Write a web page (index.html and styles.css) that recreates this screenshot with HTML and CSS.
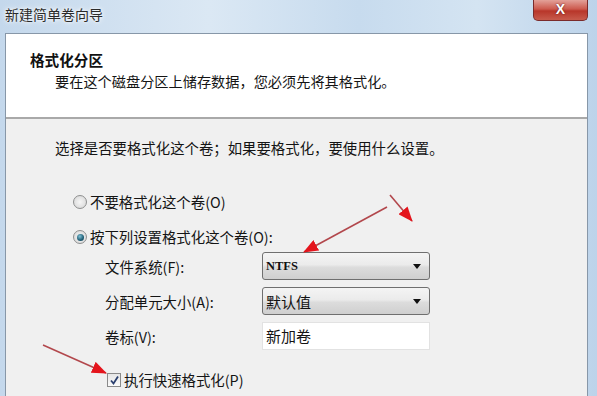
FILE: index.html
```html
<!DOCTYPE html>
<html lang="zh-CN">
<head>
  <meta charset="UTF-8" />
  <title>新建简单卷向导</title>
  <link rel="stylesheet" href="styles.css">
</head>
<body>

  <div class="window">
    <div class="titlebar">
      <span class="title">新建简单卷向导</span>
      <div class="close">X</div>
    </div>

    <div class="client">
      <div class="header">
        <div class="head-title">格式化分区</div>
        <div class="head-sub">要在这个磁盘分区上储存数据，您必须先将其格式化。</div>
      </div>

      <div class="body">
        <p class="intro">选择是否要格式化这个卷；如果要格式化，要使用什么设置。</p>

        <div class="radio-row first">
          <span class="radio"></span>
          <span>不要格式化这个卷(O)</span>
        </div>
        <div class="radio-row">
          <span class="radio checked"></span>
          <span>按下列设置格式化这个卷(O):</span>
        </div>

        <div class="form">
          <div class="label">文件系统(F):</div>
          <div class="combo"><span class="latin">NTFS</span><span class="caret"></span></div>

          <div class="label">分配单元大小(A):</div>
          <div class="combo"><span>默认值</span><span class="caret"></span></div>

          <div class="label">卷标(V):</div>
          <div class="textbox">新加卷</div>
        </div>

        <div class="check-row">
          <span class="check">
            <svg width="11" height="11" viewBox="0 0 11 11"><path d="M2 5.5 L4.5 8.5 L9 1.5" fill="none" stroke="#2a3f6e" stroke-width="1.8"/></svg>
          </span>
          <span>执行快速格式化(P)</span>
        </div>
      </div>
    </div>
  </div>

  <!-- red arrows drawn on top of the screenshot -->
  <svg class="arrows" width="597" height="396" viewBox="0 0 597 396">
    <defs>
      <marker id="head" markerUnits="userSpaceOnUse" markerWidth="15" markerHeight="12" refX="14" refY="6" orient="auto">
        <path d="M0,0 L15,6 L0,12 z" fill="#e4141c"/>
      </marker>
    </defs>
    <line x1="387" y1="207" x2="304" y2="252" stroke="#b2474c" stroke-width="1.6" marker-end="url(#head)"/>
    <line x1="390" y1="195" x2="412" y2="221" stroke="#b2474c" stroke-width="1.6" marker-end="url(#head)"/>
    <line x1="43" y1="345" x2="106" y2="373" stroke="#b2474c" stroke-width="1.6" marker-end="url(#head)"/>
  </svg>

</body>
</html>
```

FILE: styles.css
```css
* { box-sizing: border-box; margin: 0; padding: 0; }

body {
  width: 597px;
  height: 396px;
  overflow: hidden;
  position: relative;
  font-family: "Noto Sans CJK SC", "Noto Sans", sans-serif;
  font-size: 14.4px;
  color: #141414;
  background: #c9dbee;
}

.window {
  height: 396px;
  padding: 0 9px 0 5px;
  background: linear-gradient(90deg, #c4d8ec 0%, #dbe8f4 35%, #c7dbee 60%, #d4e4f2 80%, #bcd3ea 100%);
}

.titlebar {
  height: 33px;
  display: flex;
  justify-content: space-between;
  align-items: flex-start;
}

.title {
  margin-top: 4px;
  font-size: 14px;
  line-height: 20px;
  color: #2b2b2b;
  text-shadow: 0 0 6px #fff, 0 0 3px #fff;
}

.close {
  width: 55px;
  height: 21px;
  border: 1px solid #7a2b2b;
  border-top: none;
  border-radius: 0 0 5px 5px;
  background: linear-gradient(#e3a199 0%, #cc5a4e 45%, #b8362a 55%, #c75b4c 100%);
  color: #fff;
  font-family: "Liberation Sans", sans-serif;
  font-weight: bold;
  font-size: 14px;
  text-align: center;
  line-height: 19px;
  text-shadow: 0 0 2px #5a1010;
}

.client {
  height: 363px;
  border: 1px solid #8797a8;
  border-bottom: none;
  background: #f0f0f0;
}

.header {
  height: 85px;
  background: #fff;
  border-bottom: 2px solid #a9a9a9;
  padding: 16px 0 0 24px;
}

.head-title {
  font-weight: bold;
  font-size: 14.6px;
  line-height: 20px;
  color: #111;
}

.head-sub {
  padding-left: 25px;
  line-height: 22px;
  font-size: 14.2px;
}

.body {
  padding: 19px 0 0 49px;
}

.intro {
  line-height: 20px;
}

.radio-row {
  display: flex;
  align-items: center;
  gap: 3px;
  margin: 15px 0 0 18px;
  line-height: 20px;
}

.radio-row.first { margin-top: 34px; }

.radio {
  width: 14px;
  height: 14px;
  border-radius: 50%;
  border: 1px solid #8e8f8f;
  background: radial-gradient(circle, #f6f6f6 0%, #d4d4d4 100%);
  display: flex;
  align-items: center;
  justify-content: center;
}

.radio.checked::after {
  content: "";
  width: 7px;
  height: 7px;
  border-radius: 50%;
  background: radial-gradient(circle at 40% 35%, #7fc1d6 0%, #1f5d74 60%, #123c4e 100%);
}

.form {
  display: grid;
  grid-template-columns: 157px 168px;
  grid-auto-rows: 28px;
  row-gap: 7px;
  margin: 5px 0 0 50px;
  align-items: center;
}

.combo {
  height: 28px;
  border: 1px solid #6f6f6f;
  border-radius: 3px;
  background: linear-gradient(#f4f4f4 0%, #ebebeb 45%, #dcdcdc 55%, #cfcfcf 100%);
  display: flex;
  align-items: center;
  justify-content: space-between;
  padding: 0 8px 0 3px;
  font-size: 15px;
  color: #111;
}

.latin {
  font-family: "Liberation Serif", serif;
  font-weight: bold;
  font-size: 12.5px;
}

.caret {
  width: 0;
  height: 0;
  border-left: 4px solid transparent;
  border-right: 4px solid transparent;
  border-top: 5px solid #111;
}

.textbox {
  height: 28px;
  background: #fff;
  border: 1px solid #e2e2e2;
  padding-left: 3px;
  line-height: 26px;
  font-size: 15px;
}

.check-row {
  display: flex;
  align-items: center;
  gap: 3px;
  margin: 20px 0 0 52px;
  line-height: 20px;
}

.check {
  width: 14px;
  height: 14px;
  border: 1px solid #8a8a8a;
  background: linear-gradient(#e6e6e6, #fafafa);
  display: flex;
  align-items: center;
  justify-content: center;
}

.arrows {
  position: absolute;
  left: 0;
  top: 0;
  pointer-events: none;
}
```
